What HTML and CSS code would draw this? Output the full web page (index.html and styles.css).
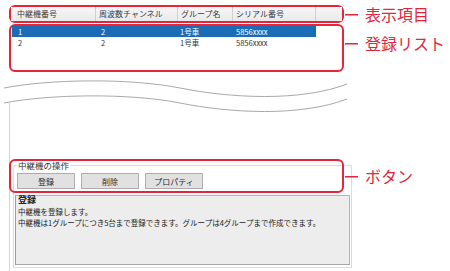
FILE: index.html
```html
<!DOCTYPE html>
<html lang="ja">
<head>
    <meta charset="UTF-8">
    <meta name="viewport" content="width=device-width, initial-scale=1.0">
    <title>中継機の登録</title>
    <link rel="stylesheet" href="styles.css">
</head>
<body>
    <div class="page">
        <!-- 表示項目 -->
        <div class="sec sec-head">
            <div class="shot hl">
                <div class="thead">
                    <div class="th h1">中継機番号</div>
                    <div class="th h2">周波数チャンネル</div>
                    <div class="th h3">グループ名</div>
                    <div class="th h4">シリアル番号</div>
                    <div class="th h5"></div>
                </div>
            </div>
            <div class="callout"><span class="lead"></span><span class="note">表示項目</span></div>
        </div>

        <!-- 登録リスト -->
        <div class="sec sec-list">
            <div class="shot hl list">
                <div class="tr sel">
                    <div class="td d1">1</div>
                    <div class="td d2">2</div>
                    <div class="td d3">1号車</div>
                    <div class="td d4">5856xxxx</div>
                </div>
                <div class="tr">
                    <div class="td d1">2</div>
                    <div class="td d2">2</div>
                    <div class="td d3">1号車</div>
                    <div class="td d4">5856xxxx</div>
                </div>
            </div>
            <div class="callout"><span class="lead"></span><span class="note">登録リスト</span></div>
        </div>

        <div class="break">
            <svg width="350" height="87" viewBox="0 0 350 87">
                <path class="wave" d="M4,16 C50,7 130,6 180,16 S300,30 347,12"/>
                <path class="wave" d="M4,31 C50,22 130,21 180,31 S300,45 347,27"/>
                <line class="edge" x1="9.5" y1="31" x2="9.5" y2="87"/>
            </svg>
        </div>

        <!-- ボタン -->
        <div class="sec sec-ops">
            <div class="shot ops">
                <fieldset class="group">
                    <legend>中継機の操作</legend>
                    <div class="btns">
                        <button>登録</button>
                        <button>削除</button>
                        <button>プロパティ</button>
                    </div>
                    <div class="desc">
                        <div class="desc-title">登録</div>
                        <div class="desc-line">中継機を登録します。</div>
                        <div class="desc-line last">中継機は1グループにつき5台まで登録できます。グループは4グループまで作成できます。</div>
                    </div>
                </fieldset>
                <div class="ring"></div>
            </div>
            <div class="callout"><span class="lead"></span><span class="note">ボタン</span></div>
        </div>
    </div>
</body>
</html>
```

FILE: styles.css
```css
* {
    box-sizing: border-box;
}
body {
    margin: 0;
    width: 450px;
    height: 271px;
    overflow: hidden;
    background-color: white;
    font-family: "Noto Sans CJK JP", "Noto Sans", sans-serif;
    color: #333333;
}
.page {
    padding-top: 5px;
}
.sec {
    display: flex;
}
.shot {
    flex: none;
    width: 335px;
    margin-left: 9px;
}
.hl {
    border: 2px solid #e4253a;
    border-radius: 6px;
}

/* header */
.sec-head {
    align-items: center;
    height: 18px;
}
.sec-head .shot {
    height: 18px;
}
.thead {
    display: flex;
    height: 14px;
    background: linear-gradient(#f7f7f7, #eaeaea);
}
.th {
    font-size: 8px;
    line-height: 14px;
    color: #3a3a3a;
    white-space: nowrap;
    padding-left: 3px;
    border-right: 1px solid #d0d0d0;
}
.h1 { width: 85px; padding-left: 6px; }
.h2 { width: 82px; }
.h3 { width: 55px; }
.h4 { width: 83px; }
.h5 { flex: 1; border-right: none; }

/* list */
.sec-list {
    margin-top: 1px;
}
.list {
    height: 48px;
    padding-left: 1px;
}
.tr {
    display: flex;
    width: 304px;
    height: 11px;
}
.tr.sel {
    background-color: #1b6cb5;
    color: white;
}
.td {
    font-size: 7.5px;
    line-height: 11px;
    white-space: nowrap;
}
.d1 { width: 84px; padding-left: 6px; }
.d2 { width: 82px; padding-left: 5px; }
.d3 { width: 55px; padding-left: 2px; }
.d4 { width: 83px; padding-left: 3px; }
.sec-list .callout {
    margin-top: 9px;
}

/* callouts */
.callout {
    display: flex;
    align-items: center;
    height: 20px;
    margin-left: 1px;
    position: relative;
    z-index: 1;
}
.lead {
    width: 13px;
    height: 1px;
    background-color: #e4253a;
    box-shadow: 0 0.5px 0 #e4253a;
}
.note {
    margin-left: 7px;
    font-size: 16px;
    line-height: 20px;
    color: #e4253a;
    white-space: nowrap;
}

/* break */
.break {
    height: 87px;
}
.break svg {
    display: block;
}
.wave {
    fill: none;
    stroke: #a9a9a9;
    stroke-width: 1;
}
.edge {
    stroke: #d6d6d6;
    stroke-width: 1;
}

/* operations */
.sec-ops {
    height: 112px;
}
.sec-ops .callout {
    margin-top: 7px;
}
.ops {
    position: relative;
    border-left: 1px solid #d6d6d6;
    padding-top: 1px;
}
.group {
    width: 339px;
    margin: 0 0 0 3px;
    padding: 2px 1px 2px 1px;
    border: 1px solid #dcdcdc;
    min-inline-size: 0;
}
.group legend {
    font-size: 8.5px;
    line-height: 11px;
    padding: 0 1px;
    margin-left: 2px;
    color: #333333;
}
.btns {
    display: flex;
    gap: 6px;
    margin-left: 2px;
}
.btns button {
    width: 58px;
    height: 16px;
    padding: 0;
    font-family: inherit;
    font-size: 8px;
    color: #2a2a2a;
    background-color: #e1e1e1;
    border: 1px solid #adadad;
}
.desc {
    height: 70px;
    margin-top: 6px;
    padding: 0 2px;
    background-color: #ecedec;
    border: 1px solid #b6b6b6;
    border-left-color: #9c9c9c;
    border-bottom-color: #a6a6a6;
    color: #222222;
}
.desc-title {
    margin-top: -2px;
    font-size: 9px;
    line-height: 12px;
    font-weight: bold;
}
.desc-line {
    font-size: 7.5px;
    line-height: 12px;
    white-space: nowrap;
}
.desc-line.last {
    line-height: 10px;
}
.ring {
    position: absolute;
    left: -1px;
    top: 0;
    width: 335px;
    height: 34px;
    border: 2px solid #e4253a;
    border-radius: 6px;
}
```
